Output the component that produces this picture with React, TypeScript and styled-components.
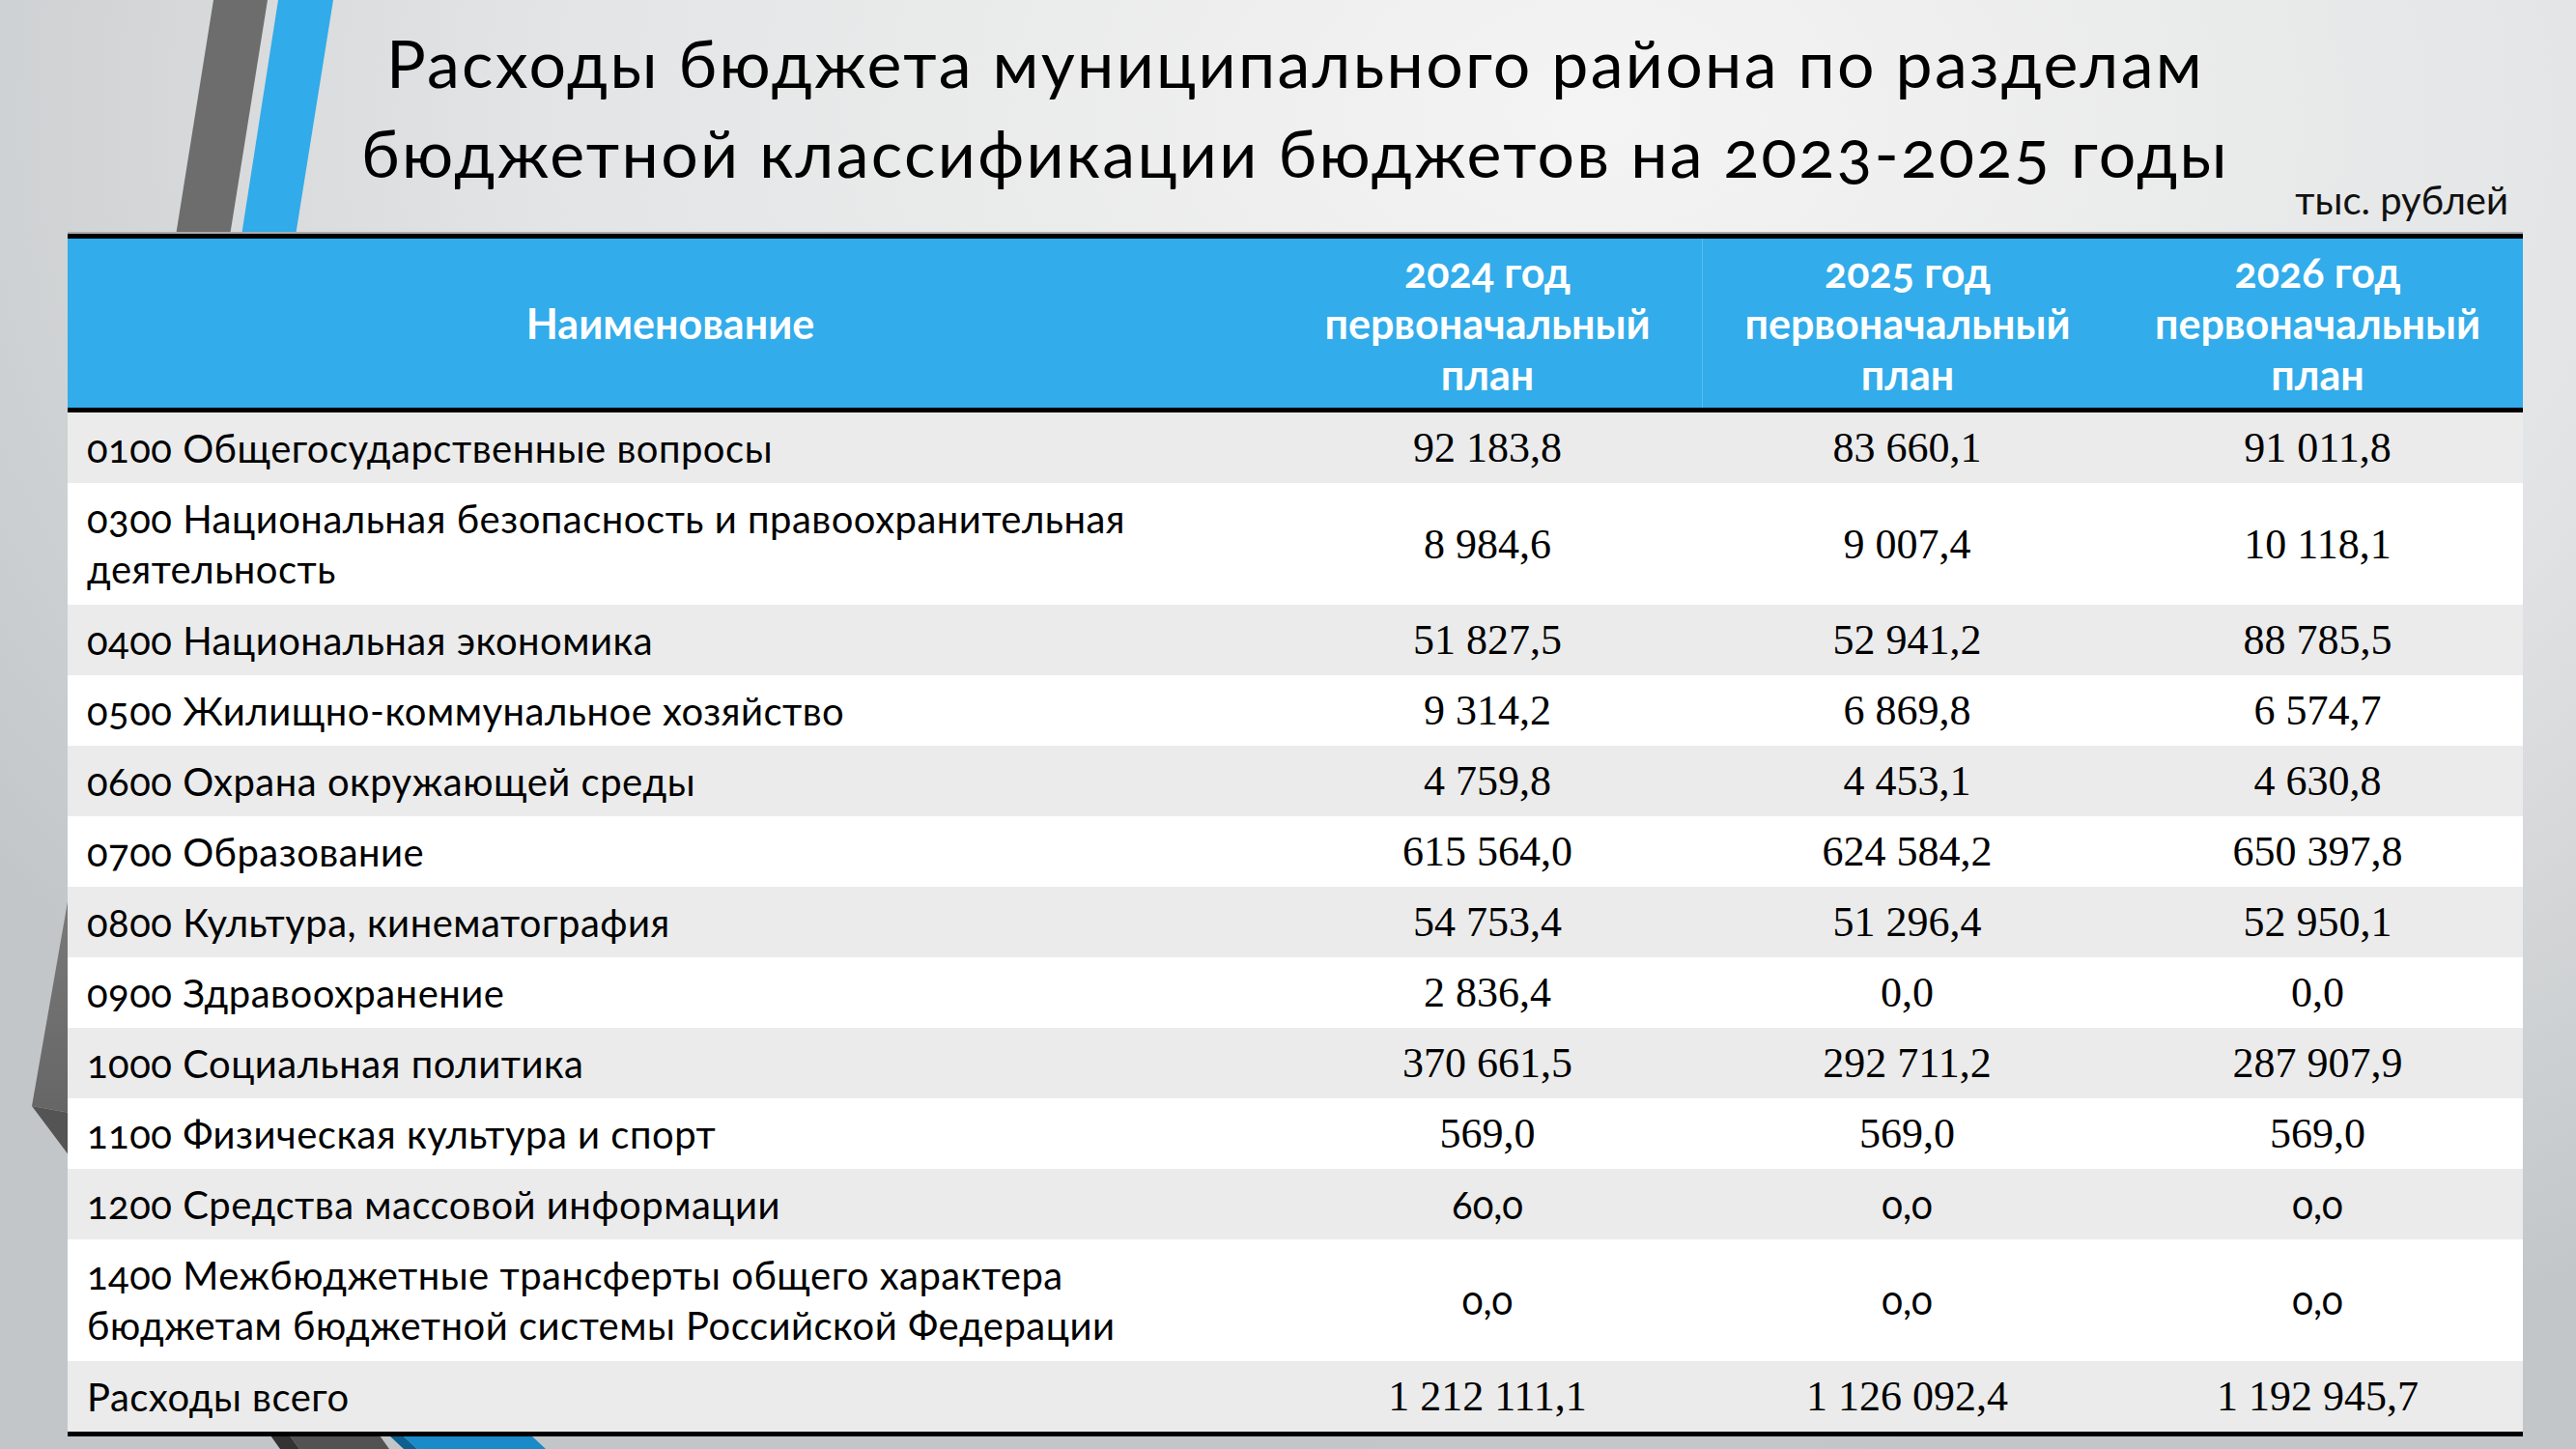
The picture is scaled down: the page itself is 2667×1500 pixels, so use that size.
import React from 'react';
import styled, { createGlobalStyle } from 'styled-components';

const GlobalStyle = createGlobalStyle`
  html, body {
    margin: 0;
    padding: 0;
  }
  body {
    width: 2667px;
    height: 1500px;
    overflow: hidden;
    font-family: Lato, 'Noto Sans', sans-serif;
  }
`;

const COLUMNS = '1248px 444px 425px 425px';
const SANS = "Lato, 'Noto Sans', sans-serif";
const SERIF = "'Liberation Serif', 'Times New Roman', serif";

const Slide = styled.div`
  position: relative;
  width: 2667px;
  height: 1500px;
  overflow: hidden;
  display: flex;
  flex-direction: column;
  background: radial-gradient(
    ellipse 2000px 1400px at 1650px 120px,
    #f4f4f4 0%,
    #e3e4e5 55%,
    #c2c6c8 100%
  );
`;

const Decor = styled.svg`
  position: absolute;
  left: 0;
  top: 0;
  z-index: 0;
`;

const Heading = styled.header`
  position: relative;
  z-index: 1;
  height: 242px;
  box-sizing: border-box;
  padding-top: 18px;
  display: flex;
  flex-direction: column;
`;

const Title = styled.h1`
  margin: 0 0 0 240px;
  width: 2202px;
  text-align: center;
  font-family: ${SANS};
  font-weight: 400;
  font-size: 68px;
  letter-spacing: 2.3px;
  line-height: 93px;
  color: #000;
  font-variant-numeric: oldstyle-nums;
`;

const Units = styled.div`
  align-self: flex-end;
  margin-top: -20px;
  padding-right: 70px;
  font-size: 40px;
  line-height: 46px;
  color: #111;
`;

const Table = styled.div`
  position: relative;
  z-index: 1;
  margin-left: 70px;
  width: 2542px;
  border-top: 5px solid #000;
  border-bottom: 5px solid #000;
  box-shadow: 0 -2px 0 #a9abac;
`;

const HeadRow = styled.div`
  display: grid;
  grid-template-columns: ${COLUMNS};
  height: 175px;
  background: #32acea;
  border-bottom: 5px solid #000;
`;

const HeadCell = styled.div<{ $divider?: boolean }>`
  display: flex;
  align-items: center;
  justify-content: center;
  text-align: center;
  color: #fff;
  font-family: ${SANS};
  font-weight: 700;
  font-size: 43px;
  line-height: 53px;
  font-variant-numeric: oldstyle-nums;
  border-left: ${(p) => (p.$divider ? '1px solid rgba(255, 255, 255, 0.2)' : 'none')};
`;

const Row = styled.div<{ $shaded: boolean; $tall?: boolean }>`
  display: grid;
  grid-template-columns: ${COLUMNS};
  height: ${(p) => (p.$tall ? 126 : 73)}px;
  background: ${(p) => (p.$shaded ? '#ebebeb' : '#ffffff')};
`;

const NameCell = styled.div`
  display: flex;
  align-items: center;
  padding: 0 20px;
  font-family: ${SANS};
  font-size: 40px;
  letter-spacing: 0.5px;
  line-height: 52px;
  color: #000;
  font-variant-numeric: oldstyle-nums;
`;

const ValueCell = styled.div<{ $sans?: boolean }>`
  display: flex;
  align-items: center;
  justify-content: center;
  color: #000;
  font-family: ${(p) => (p.$sans ? SANS : SERIF)};
  font-size: ${(p) => (p.$sans ? '40px' : '44px')};
  font-variant-numeric: ${(p) => (p.$sans ? 'oldstyle-nums' : 'normal')};
`;

type BudgetRow = {
  name: string[];
  values: [string, string, string];
  sans?: boolean;
};

const rows: BudgetRow[] = [
  { name: ['0100 Общегосударственные вопросы'], values: ['92 183,8', '83 660,1', '91 011,8'] },
  {
    name: ['0300 Национальная безопасность и правоохранительная', 'деятельность'],
    values: ['8 984,6', '9 007,4', '10 118,1'],
  },
  { name: ['0400 Национальная экономика'], values: ['51 827,5', '52 941,2', '88 785,5'] },
  { name: ['0500 Жилищно-коммунальное хозяйство'], values: ['9 314,2', '6 869,8', '6 574,7'] },
  { name: ['0600 Охрана окружающей среды'], values: ['4 759,8', '4 453,1', '4 630,8'] },
  { name: ['0700 Образование'], values: ['615 564,0', '624 584,2', '650 397,8'] },
  { name: ['0800 Культура, кинематография'], values: ['54 753,4', '51 296,4', '52 950,1'] },
  { name: ['0900 Здравоохранение'], values: ['2 836,4', '0,0', '0,0'] },
  { name: ['1000 Социальная политика'], values: ['370 661,5', '292 711,2', '287 907,9'] },
  { name: ['1100 Физическая культура и спорт'], values: ['569,0', '569,0', '569,0'] },
  { name: ['1200 Средства массовой информации'], values: ['60,0', '0,0', '0,0'], sans: true },
  {
    name: [
      '1400 Межбюджетные трансферты общего характера',
      'бюджетам бюджетной системы Российской Федерации',
    ],
    values: ['0,0', '0,0', '0,0'],
    sans: true,
  },
  { name: ['Расходы всего'], values: ['1 212 111,1', '1 126 092,4', '1 192 945,7'] },
];

const years = ['2024', '2025', '2026'];

const withBreaks = (lines: string[]) =>
  lines.map((line, i) => (
    <React.Fragment key={i}>
      {i > 0 && <br />}
      {line}
    </React.Fragment>
  ));

const Decorations: React.FC = () => (
  <Decor width="2667" height="1500" viewBox="0 0 2667 1500">
    <defs>
      <linearGradient id="wedge" x1="0" y1="0" x2="0" y2="1">
        <stop offset="0" stopColor="#7a7a7a" />
        <stop offset="1" stopColor="#666666" />
      </linearGradient>
    </defs>
    {/* stripes at the top */}
    <polygon points="221,0 277,0 238,244 182,244" fill="#6d6d6d" />
    <polygon points="288,0 345,0 306,244 250,244" fill="#31abe9" />
    {/* wedge peeking out on the left */}
    <polygon points="72,922 33,1145 72,1152" fill="url(#wedge)" />
    <polygon points="33,1145 72,1152 72,1197" fill="#545454" />
    {/* stripes at the bottom */}
    <polygon points="280,1486 300,1486 310,1500 290,1500" fill="#333333" />
    <polygon points="300,1486 393,1486 403,1500 310,1500" fill="#525252" />
    <polygon points="403,1486 417,1486 432,1500 418,1500" fill="#0f5f8f" />
    <polygon points="417,1486 550,1486 565,1500 432,1500" fill="#1a8ac8" />
  </Decor>
);

const App: React.FC = () => (
  <>
    <GlobalStyle />
    <Slide>
      <Decorations />
      <Heading>
        <Title>
          Расходы бюджета муниципального района по разделам
          <br />
          бюджетной классификации бюджетов на 2023-2025 годы
        </Title>
        <Units>тыс. рублей</Units>
      </Heading>
      <Table>
        <HeadRow>
          <HeadCell>Наименование</HeadCell>
          {years.map((year, i) => (
            <HeadCell key={year} $divider={i === 1}>
              {year} год
              <br />
              первоначальный
              <br />
              план
            </HeadCell>
          ))}
        </HeadRow>
        {rows.map((row, i) => (
          <Row key={row.name[0]} $shaded={i % 2 === 0} $tall={row.name.length > 1}>
            <NameCell>
              <span>{withBreaks(row.name)}</span>
            </NameCell>
            {row.values.map((value, j) => (
              <ValueCell key={j} $sans={row.sans}>
                {value}
              </ValueCell>
            ))}
          </Row>
        ))}
      </Table>
    </Slide>
  </>
);

export default App;
